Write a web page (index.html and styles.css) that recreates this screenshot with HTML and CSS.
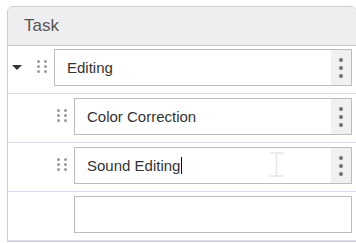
FILE: index.html
```html
<!DOCTYPE html>
<html lang="en">
<head>
    <meta charset="UTF-8">
    <title>Task Tree</title>
    <link rel="stylesheet" href="styles.css">
</head>
<body>
    <div class="tree">
        <div class="tree-header">Task</div>

        <div class="row">
            <span class="toggle"></span>
            <span class="handle"><i></i><i></i><i></i><i></i><i></i><i></i></span>
            <div class="field">
                <span class="value">Editing</span>
                <span class="menu"><i></i><i></i><i></i></span>
            </div>
        </div>

        <div class="row child">
            <span class="toggle empty"></span>
            <span class="handle"><i></i><i></i><i></i><i></i><i></i><i></i></span>
            <div class="field">
                <span class="value">Color Correction</span>
                <span class="menu"><i></i><i></i><i></i></span>
            </div>
        </div>

        <div class="row child">
            <span class="toggle empty"></span>
            <span class="handle"><i></i><i></i><i></i><i></i><i></i><i></i></span>
            <div class="field">
                <span class="value">Sound Editing<span class="caret"></span></span>
                <span class="menu"><i></i><i></i><i></i></span>
            </div>
            <svg class="ibeam" width="15" height="25" viewBox="0 0 15 25">
                <path d="M0.5 1h14M7.5 1v23M0.5 24h14" stroke="#e6e6e6" stroke-width="1.5" fill="none"/>
            </svg>
        </div>

        <div class="row child">
            <span class="toggle empty"></span>
            <span class="handle hidden"></span>
            <div class="field blank"></div>
        </div>
    </div>
</body>
</html>
```

FILE: styles.css
```css
body {
    font-family: "Liberation Sans", Arial, sans-serif;
    margin: 0;
    padding: 6px 0 0 7px;
    background-color: white;
    overflow: hidden;
}

.tree {
    width: 348px;
    border: 1px solid #cfcfcf;
    border-radius: 6px 6px 0 0;
}

.tree-header {
    height: 38px;
    line-height: 38px;
    padding-left: 16px;
    font-size: 17px;
    color: #555;
    background-color: #eeeef0;
    border-bottom: 1px solid #c8c8c8;
    border-radius: 6px 6px 0 0;
}

.row {
    position: relative;
    display: flex;
    align-items: center;
    padding: 3px 4px 7px 4px;
    border-bottom: 1px solid #dddaed;
}

.row.child {
    padding-top: 4px;
    padding-left: 24px;
}

.toggle {
    width: 0;
    height: 0;
    margin-right: 15px;
    border-left: 5px solid transparent;
    border-right: 5px solid transparent;
    border-top: 5px solid #333;
}

.toggle.empty {
    border-top-color: transparent;
}

.handle {
    display: grid;
    grid-template-columns: 3px 3px;
    grid-auto-rows: 3px;
    column-gap: 4px;
    row-gap: 2px;
    width: 10px;
    margin-right: 7px;
    margin-top: -3px;
}

.handle i {
    background-color: #9a9a9a;
    border-radius: 50%;
}

.field {
    flex: 1;
    display: flex;
    align-items: stretch;
    height: 37px;
    border: 1px solid #bdbdbd;
    box-sizing: border-box;
    background-color: white;
}

.value {
    flex: 1;
    display: flex;
    align-items: center;
    padding-left: 12px;
    font-size: 15px;
    color: #333;
}

.caret {
    display: inline-block;
    width: 1px;
    height: 17px;
    margin-left: 1px;
    background-color: #111;
}

.menu {
    width: 20px;
    background-color: #f0f0f0;
    display: flex;
    flex-direction: column;
    align-items: center;
    justify-content: center;
    gap: 4px;
}

.menu i {
    width: 4px;
    height: 4px;
    border-radius: 50%;
    background-color: #727272;
}

.ibeam {
    position: absolute;
    left: 261px;
    top: 9px;
}
```
